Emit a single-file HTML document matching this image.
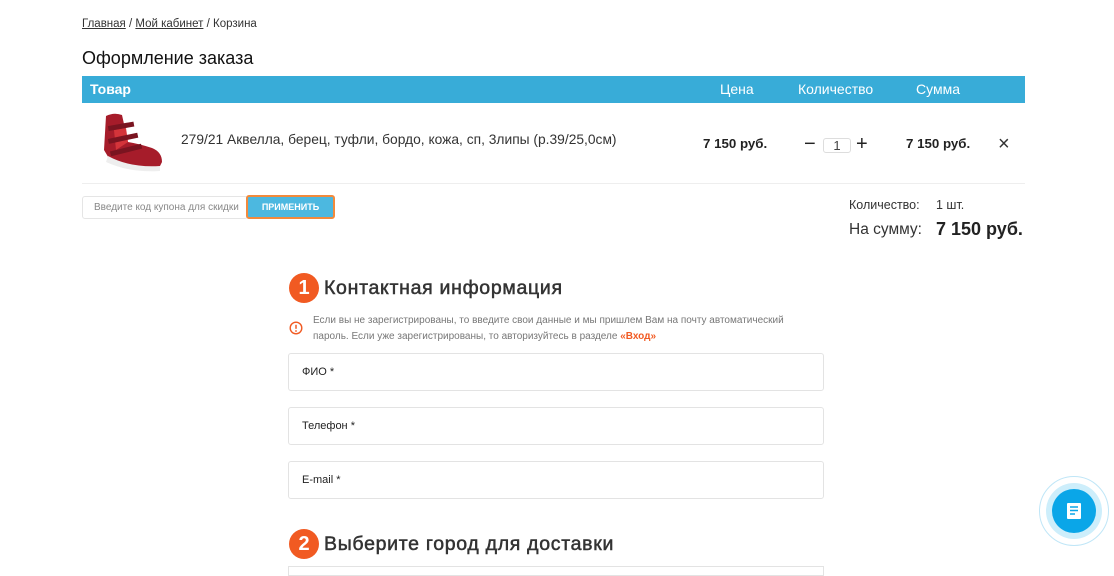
<!DOCTYPE html>
<html><head><meta charset="utf-8"><style>
*{box-sizing:border-box;margin:0;padding:0}
body{width:1114px;height:570px;overflow:hidden;background:#fff;font-family:"Liberation Sans",sans-serif;color:#222;position:relative}
.a{position:absolute;white-space:nowrap}
.crumb{left:82px;top:18px;font-size:11.5px;color:#333}
.crumb u{color:#333}
h1{position:absolute;left:82px;top:48px;font-size:18px;font-weight:normal;color:#111}
.bar{position:absolute;left:82px;top:76px;width:943px;height:27px;background:#38acd8;color:#fff;font-size:14px}
.bar span{position:absolute;top:5px}
.line{position:absolute;left:82px;top:183px;width:943px;height:1px;background:#eee}
.inp{position:absolute;left:288px;width:536px;height:38px;border:1px solid #e3e3e3;border-radius:3px;font-size:11px;color:#222;padding:12px 13px}
.num{position:absolute;width:30px;height:30px;border-radius:50%;background:#f15a22;color:#fff;font-size:20px;font-weight:bold;text-align:center;line-height:30px}
.h2{font-size:19.5px;color:#333;letter-spacing:.7px;-webkit-text-stroke:.5px #333}
</style></head><body>
<div class="a crumb"><u>Главная</u> / <u>Мой кабинет</u> / Корзина</div>
<h1>Оформление заказа</h1>
<div class="bar"><span style="left:8px;font-weight:bold">Товар</span><span style="left:638px">Цена</span><span style="left:716px">Количество</span><span style="left:834px">Сумма</span></div>
<svg class="a" style="left:100px;top:110px" width="68" height="64" viewBox="0 0 68 64">
<path d="M6 6 Q14 2 22 5 L28 32 Q40 34 52 38 Q62 42 62 52 L58 60 Q30 60 10 50 L4 40 Z" fill="#a61c2a"/>
<path d="M14 20 L26 18 L28 32 L16 40 Z" fill="#d4343a"/>
<path d="M8 46 Q30 58 60 56 L60 61 Q30 63 6 52 Z" fill="#eee"/>
<rect x="8" y="14" width="26" height="5" fill="#7a1420" transform="rotate(-10 20 16)"/>
<rect x="8" y="26" width="30" height="5" fill="#7a1420" transform="rotate(-12 22 28)"/>
<rect x="10" y="38" width="32" height="5" fill="#7a1420" transform="rotate(-14 24 40)"/>
</svg>
<div class="a" style="left:181px;top:132px;font-size:13.8px;color:#333">279/21 Аквелла, берец, туфли, бордо, кожа, сп, 3липы (р.39/25,0см)</div>
<div class="a" style="left:703px;top:136px;font-size:13.3px;font-weight:bold">7 150 руб.</div>
<div class="a" style="left:804px;top:133px;font-size:20px">−</div>
<div class="a" style="left:823px;top:138px;width:28px;height:15px;border:1px solid #ddd;border-radius:3px;font-size:13px;text-align:center;line-height:14px;color:#444">1</div>
<div class="a" style="left:856px;top:133px;font-size:20px">+</div>
<div class="a" style="left:906px;top:136px;font-size:13.3px;font-weight:bold">7 150 руб.</div>
<div class="a" style="left:998px;top:133px;font-size:20px;color:#333">×</div>
<div class="line"></div>
<div class="a" style="left:82px;top:196px;width:166px;height:23px;border:1px solid #e5e5e5;border-radius:3px;font-size:10px;color:#888;padding:5px 11px;overflow:hidden">Введите код купона для скидки</div>
<div class="a" style="left:246px;top:195px;width:89px;height:24px;background:#4cb8e0;border:2px solid #f28a3c;border-radius:3px;color:#fff;font-size:9px;font-weight:bold;text-align:center;line-height:21px">ПРИМЕНИТЬ</div>
<div class="a" style="left:849px;top:198px;font-size:12.5px;color:#333">Количество:</div>
<div class="a" style="left:936px;top:198px;font-size:12.5px;color:#333">1 шт.</div>
<div class="a" style="left:849px;top:221px;font-size:15.5px;color:#333">На сумму:</div>
<div class="a" style="left:936px;top:219px;font-size:18px;font-weight:bold;color:#222">7 150 руб.</div>
<div class="num" style="left:289px;top:273px">1</div>
<div class="a h2" style="left:324px;top:277px">Контактная информация</div>
<svg class="a" style="left:289px;top:321px" width="14" height="14" viewBox="0 0 14 14"><circle cx="7" cy="7" r="5.8" fill="none" stroke="#f15a22" stroke-width="1.4"/><path d="M7 3.8v4" stroke="#f15a22" stroke-width="1.5"/><circle cx="7" cy="10" r=".9" fill="#f15a22"/></svg>
<div class="a" style="left:313px;top:313px;font-size:10px;color:#777;line-height:16px">Если вы не зарегистрированы, то введите свои данные и мы пришлем Вам на почту автоматический<br>пароль. Если уже зарегистрированы, то авторизуйтесь в разделе <b style="color:#f15a22">«Вход»</b></div>
<div class="inp" style="top:353px">ФИО *</div>
<div class="inp" style="top:407px">Телефон *</div>
<div class="inp" style="top:461px">E-mail *</div>
<div class="num" style="left:289px;top:529px">2</div>
<div class="a h2" style="left:324px;top:533px">Выберите город для доставки</div>
<div class="a" style="left:288px;top:566px;width:536px;height:10px;border:1px solid #e3e3e3"></div>
<div class="a" style="left:1039px;top:476px;width:70px;height:70px;border-radius:50%;border:1px solid #bfe6f7"></div>
<div class="a" style="left:1046px;top:483px;width:56px;height:56px;border-radius:50%;background:#cdeefb"></div>
<div class="a" style="left:1052px;top:489px;width:44px;height:44px;border-radius:50%;background:#0aa6e8"></div>
<svg class="a" style="left:1066px;top:502px" width="16" height="18" viewBox="0 0 16 18"><rect x="1" y="1" width="14" height="16" rx="1" fill="#fff"/><path d="M4 5h8M4 8.5h8M4 12h5" stroke="#0aa6e8" stroke-width="1.6"/></svg>
</body></html>
